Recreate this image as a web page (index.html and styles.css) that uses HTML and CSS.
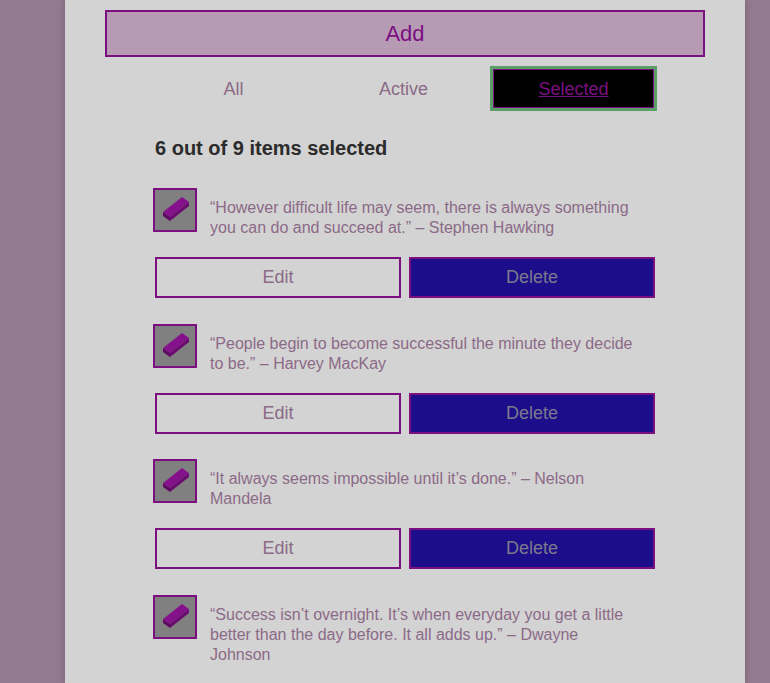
FILE: index.html
```html
<!DOCTYPE html>
<html lang="en">
<head>
<meta charset="utf-8">
<title>Todo</title>
<link rel="stylesheet" href="styles.css">
</head>
<body>
<div class="panel">
  <button class="add">Add</button>
  <nav class="tabs">
    <span class="tab">All</span>
    <span class="tab">Active</span>
    <span class="tab tab-on"><u>Selected</u></span>
  </nav>
  <h2 class="count">6 out of 9 items selected</h2>

  <div class="item">
    <div class="row">
      <span class="check"><svg viewBox="0 0 40 40" width="40" height="40"><polygon points="8,22 27,7 34,12 15,27" fill="#85128a"/><polygon points="8,22 15,27 15,31 8,26" fill="#5c0a62"/><polygon points="15,27 34,12 34,16 15,31" fill="#6a0b70"/></svg></span>
      <p class="quote">“However difficult life may seem, there is always something you can do and succeed at.” – Stephen Hawking</p>
    </div>
    <div class="actions"><button class="edit">Edit</button><button class="del">Delete</button></div>
  </div>

  <div class="item">
    <div class="row">
      <span class="check"><svg viewBox="0 0 40 40" width="40" height="40"><polygon points="8,22 27,7 34,12 15,27" fill="#85128a"/><polygon points="8,22 15,27 15,31 8,26" fill="#5c0a62"/><polygon points="15,27 34,12 34,16 15,31" fill="#6a0b70"/></svg></span>
      <p class="quote">“People begin to become successful the minute they decide to be.” – Harvey MacKay</p>
    </div>
    <div class="actions"><button class="edit">Edit</button><button class="del">Delete</button></div>
  </div>

  <div class="item">
    <div class="row">
      <span class="check"><svg viewBox="0 0 40 40" width="40" height="40"><polygon points="8,22 27,7 34,12 15,27" fill="#85128a"/><polygon points="8,22 15,27 15,31 8,26" fill="#5c0a62"/><polygon points="15,27 34,12 34,16 15,31" fill="#6a0b70"/></svg></span>
      <p class="quote">“It always seems impossible until it’s done.” – Nelson Mandela</p>
    </div>
    <div class="actions"><button class="edit">Edit</button><button class="del">Delete</button></div>
  </div>

  <div class="item">
    <div class="row">
      <span class="check"><svg viewBox="0 0 40 40" width="40" height="40"><polygon points="8,22 27,7 34,12 15,27" fill="#85128a"/><polygon points="8,22 15,27 15,31 8,26" fill="#5c0a62"/><polygon points="15,27 34,12 34,16 15,31" fill="#6a0b70"/></svg></span>
      <p class="quote">“Success isn’t overnight. It’s when everyday you get a little better than the day before. It all adds up.” – Dwayne Johnson</p>
    </div>
  </div>
</div>
</body>
</html>
```

FILE: styles.css
```css
html, body {
  margin: 0;
  padding: 0;
  background: #937b8f;
  height: 683px;
  overflow: hidden;
  font-family: "Liberation Sans", Arial, sans-serif;
}
.panel {
  margin-left: 65px;
  width: 680px;
  min-height: 683px;
  background: #d3d3d3;
  box-shadow: 0 0 6px rgba(60, 30, 60, 0.35);
  padding-top: 10px;
  box-sizing: border-box;
}
.add {
  display: block;
  margin: 0 40px;
  width: 600px;
  height: 47px;
  border: 2px solid #7b0f80;
  background: #b79bb4;
  color: #7b0f80;
  font-family: inherit;
  font-size: 22px;
  padding: 0;
}
.tabs {
  display: grid;
  grid-template-columns: 167px 167px 167px;
  column-gap: 3px;
  margin: 9px 0 0 85px;
  height: 43px;
}
.tab {
  display: flex;
  align-items: center;
  justify-content: center;
  padding-top: 3px;
  box-sizing: border-box;
  font-size: 18px;
  color: #8b6a87;
}
.tab-on {
  background: #000;
  border: 1px solid #7b0f80;
  outline: 3px solid #5a9e68;
  outline-offset: 0;
  margin: 3px 0 0 3px;
  padding-top: 2px;
  height: 37px;
  width: 159px;
  color: #7b0f80;
  box-sizing: content-box;
  height: 35px;
}
.count {
  margin: 27px 0 0 90px;
  font-size: 20px;
  line-height: 24px;
  font-weight: bold;
  color: #2b2b2b;
}
.item {
  margin: 28px 0 0 88px;
  width: 502px;
}
.item + .item {
  margin-top: 25.5px;
}
.row {
  display: flex;
  align-items: flex-start;
}
.check {
  width: 40px;
  height: 40px;
  border: 2px solid #7b0f80;
  background: #808080;
  display: block;
  flex: none;
}
.check svg { display: block; }
.quote {
  margin: 10px 0 0 13px;
  width: 430px;
  font-size: 16px;
  line-height: 20px;
  color: #8b6a87;
}
.actions {
  display: grid;
  grid-template-columns: 246px 246px;
  column-gap: 8px;
  margin: 19px 0 0 2px;
}
.actions button {
  height: 41px;
  border: 2px solid #7b0f80;
  font-family: inherit;
  font-size: 18px;
  padding: 0;
}
.edit {
  background: #d3d3d3;
  color: #8b6a87;
}
.del {
  background: #1c0e8a;
  color: #7c7a8c;
}
```
